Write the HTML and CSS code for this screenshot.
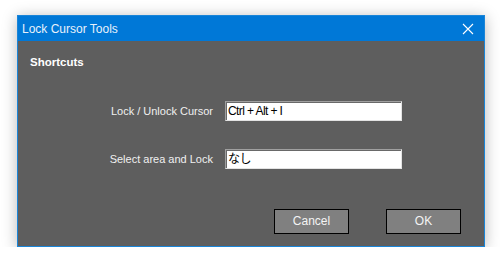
FILE: index.html
```html
<!DOCTYPE html>
<html lang="ja">
<head>
    <meta charset="UTF-8">
    <title>Lock Cursor Tools</title>
    <link rel="stylesheet" href="styles.css">
</head>
<body>
    <div class="window">
        <div class="titlebar">
            <span class="title">Lock Cursor Tools</span>
            <svg class="close" width="12" height="12" viewBox="0 0 12 12">
                <path d="M1 1 L11 11 M11 1 L1 11" stroke="#ffffff" stroke-width="1.1" fill="none"/>
            </svg>
        </div>
        <div class="content">
            <div class="heading">Shortcuts</div>

            <div class="form">
                <label class="label">Lock / Unlock Cursor</label>
                <div class="field">Ctrl + Alt + I</div>
                <label class="label">Select area and Lock</label>
                <div class="field">なし</div>
            </div>

            <div class="buttons">
                <div class="btn">Cancel</div>
                <div class="btn">OK</div>
            </div>
        </div>
    </div>
</body>
</html>
```
FILE: styles.css
```css
body {
    margin: 0;
    padding: 15px 15px 0 17px;
    background: #ffffff;
    font-family: 'Liberation Sans', 'Noto Sans CJK JP', sans-serif;
}

.window {
    width: 466px;
    border: 1px solid #1a85d8;
    background: #5e5e5e;
    box-shadow: 0 2px 14px rgba(0, 0, 0, 0.28);
}

.titlebar {
    height: 25px;
    background: #0078d7;
    display: flex;
    align-items: center;
    justify-content: space-between;
    padding: 0 10px 0 4px;
}

.title {
    color: #e8f1fb;
    font-size: 12px;
}

.close {
    display: block;
}

.content {
    height: 205px;
    display: flex;
    flex-direction: column;
}

.heading {
    color: #ffffff;
    font-weight: bold;
    font-size: 11.5px;
    line-height: 13px;
    margin: 15px 0 0 12px;
}

.form {
    display: grid;
    grid-template-columns: 195px 177px;
    grid-auto-rows: 20px;
    column-gap: 12px;
    row-gap: 28px;
    margin-top: 32px;
}

.label {
    color: #f0f0f0;
    font-size: 11px;
    text-align: right;
    line-height: 20px;
}

.field {
    background: #ffffff;
    border-top: 1px solid #a0a0a0;
    border-left: 1px solid #a0a0a0;
    border-right: 1px solid #e3e3e3;
    border-bottom: 1px solid #e3e3e3;
    box-shadow: inset 1px 1px 0 #696969;
    color: #000000;
    font-size: 12px;
    line-height: 18px;
    padding-left: 2px;
    letter-spacing: -0.6px;
}

.buttons {
    display: flex;
    justify-content: flex-end;
    gap: 37px;
    margin-top: 40px;
    padding-right: 23px;
}

.btn {
    width: 73px;
    height: 23px;
    border: 1px solid #000000;
    background: #808080;
    color: #f4f4f4;
    font-size: 12px;
    line-height: 23px;
    text-align: center;
}
```
